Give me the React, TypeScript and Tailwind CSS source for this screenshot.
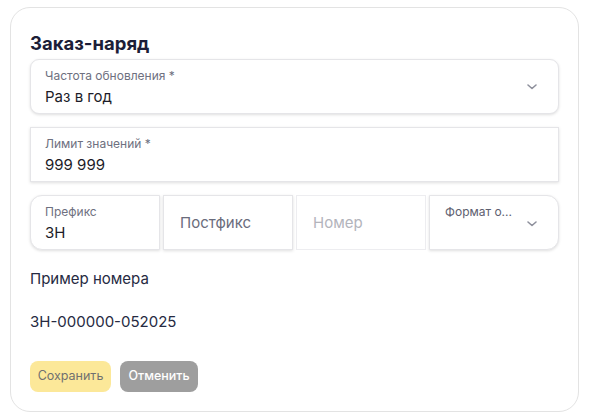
import React from "react";

function Chevron() {
    return (
        <svg width="12" height="8" viewBox="0 0 12 8" fill="none" className="shrink-0">
            <path d="M2 2l4 3.5L10 2" stroke="#8e909c" strokeWidth="1.6" strokeLinecap="round" strokeLinejoin="round" />
        </svg>
    );
}

const field = "bg-white border border-[#e5e5e8] shadow-[0_1px_3px_rgba(0,0,0,0.13)]";

export default function App() {
    return (
        <div className="min-h-screen bg-white pt-[7px] pl-[10px]" style={{ fontFamily: "Inter, 'Noto Sans', sans-serif" }}>
            <div className="w-[569px] rounded-[20px] border border-[#e3e3e3] px-[19px] pt-[23px] pb-[19px]">
                <h1 className="text-[18.5px] leading-[24px] font-bold text-[#1c1e38]">Заказ-наряд</h1>

                <div className={`${field} mt-[4px] h-[55px] rounded-[9px] pl-[14px] pr-[20px] flex items-center`}>
                    <div className="flex-1 pt-[1px]">
                        <div className="text-[12px] leading-[16px] text-[#6e7080]">Частота обновления *</div>
                        <div className="mt-[3px] text-[15px] leading-[20px] text-[#1c1c28]">Раз в год</div>
                    </div>
                    <Chevron />
                </div>

                <div className={`${field} mt-[13px] h-[55px] pl-[14px] flex items-center`}>
                    <div className="pt-[1px]">
                        <div className="text-[12px] leading-[16px] text-[#6e7080]">Лимит значений *</div>
                        <div className="mt-[3px] text-[15px] leading-[20px] text-[#1c1c28]">999 999</div>
                    </div>
                </div>

                <div className="mt-[13px] grid grid-cols-4 gap-[3px] h-[55px]">
                    <div className={`${field} rounded-l-[12px] pl-[14px] flex items-center`}>
                        <div className="pt-[2px]">
                            <div className="text-[12px] leading-[16px] text-[#6e7080]">Префикс</div>
                            <div className="mt-[3px] text-[15px] leading-[20px] text-[#1c1c28]">ЗН</div>
                        </div>
                    </div>
                    <div className={`${field} pl-[16px] flex items-center`}>
                        <span className="text-[15px] leading-[20px] text-[#6a6c7c]">Постфикс</span>
                    </div>
                    <div className="bg-white border border-[#ededf0] pl-[16px] flex items-center">
                        <span className="text-[15px] leading-[20px] text-[#b3b4bc]">Номер</span>
                    </div>
                    <div className={`${field} min-w-0 rounded-r-[12px] pl-[15px] pr-[20px] flex items-start`}>
                        <span className="flex-1 mt-[8px] text-[12px] leading-[16px] text-[#5e6070] whitespace-nowrap">Формат о...</span>
                        <div className="mt-[24px]">
                            <Chevron />
                        </div>
                    </div>
                </div>

                <div className="mt-[19px] text-[15px] leading-[20px] text-[#262a42]">Пример номера</div>
                <div className="mt-[23px] text-[15px] leading-[20px] text-[#262a42]">ЗН-000000-052025</div>

                <div className="mt-[29px] flex gap-[9px]">
                    <button className="h-[31px] w-[81px] rounded-[8px] bg-[#fce899] text-[12.5px] text-[#707070]">Сохранить</button>
                    <button className="h-[31px] w-[78px] rounded-[8px] bg-[#9e9e9e] text-[12.5px] font-medium text-white">Отменить</button>
                </div>
            </div>
        </div>
    );
}
